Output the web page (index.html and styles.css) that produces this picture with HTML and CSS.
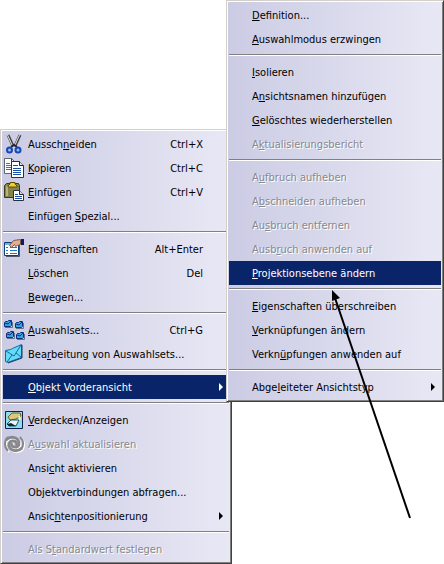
FILE: index.html
```
<!DOCTYPE html>
<html lang="de">
<head>
    <meta charset="UTF-8">
    <title>Objekt Vorderansicht</title>
    <link rel="stylesheet" href="styles.css">
</head>

<body>
<div class="menus">
    <div class="menu main" role="menu">
        <button class="item">
            <svg class="icon" viewBox="0 0 20 20">
                <path d="M4 1l5 11M16 1l-5 11" stroke="#444" stroke-width="3" fill="none"/>
                <path d="M3.5 1l5 11M15.5 1l-5 11" stroke="#e0e0e4" stroke-width="1" fill="none"/>
                <path d="M7 13l3-2 3 2" stroke="#223" stroke-width="2" fill="none"/>
                <circle cx="5.500" cy="16" r="2.500" fill="#9cb8f4" stroke="#1648b4" stroke-width="2"/>
                <circle cx="14" cy="16" r="2.500" fill="#9cb8f4" stroke="#1648b4" stroke-width="2"/>
            </svg>
            <span class="label">Aussch<u>n</u>eiden</span><span class="key">Ctrl+X</span>
        </button>
        <button class="item">
            <svg class="icon" viewBox="0 0 20 20">
                <path d="M.5 .5h7l3 3v12H.5z" fill="#fff" stroke="#5c6872"/>
                <path d="M7.5 .5v3h3" fill="none" stroke="#333"/>
                <path d="M2 5.500h4M2 7.500h5M2 9.500h5M2 11.500h5" stroke="#3c70b8"/>
                <path d="M7.500 3.500h8l4 4v12h-12z" fill="#fff" stroke="#28303c"/>
                <path d="M15.500 3.500v4h4" fill="#d4dce8" stroke="#222"/>
                <path d="M9 7.500h5M9 10.500h8M9 12.500h8M9 14.500h8M9 16.500h8" stroke="#1c50a8"/>
            </svg>
            <span class="label"><u>K</u>opieren</span><span class="key">Ctrl+C</span>
        </button>
        <button class="item">
            <svg class="icon" viewBox="0 0 20 20">
                <path d="M.5 3.500l2-2h12l1 2v12H.5z" fill="#85854a" stroke="#38381c"/>
                <path d="M2 4h2v10H2z" fill="#b4b47c"/>
                <path d="M4 4l2-2V.5h5V2l2 2v1H4z" fill="#f0d030" stroke="#5c4c10"/>
                <path d="M9.500 8.500h6l4 4v6h-10z" fill="#fff" stroke="#28303c"/>
                <path d="M15.500 8.500v4h4" fill="#d4dce8" stroke="#222"/>
                <path d="M11 12.500h3M11 14.500h7M11 16.500h7" stroke="#1c50a8"/>
            </svg>
            <span class="label"><u>E</u>infügen</span><span class="key">Ctrl+V</span>
        </button>
        <button class="item"><span class="icon"></span><span class="label">Einfügen <u>S</u>pezial...</span></button>
        <hr class="line">
        <button class="item">
            <svg class="icon" viewBox="0 0 20 20">
                <path d="M.5 3.500h14v13H.5z" fill="#fff" stroke="#123c74"/>
                <path d="M1 4h7v2H1z" fill="#58c0d8"/>
                <path d="M15.500 5v12.500H2" fill="none" stroke="#50586c"/>
                <path d="M2 8.500h2M2 11.500h2M2 14.500h2M6 8.500h7M6 11.500h7M6 14.500h7" stroke="#1878d0"/>
                <path d="M5.500 6.500l4-5 7-1v5l-3 1-2 1-1-2-3 3z" fill="#e0b090" stroke="#805848"/>
                <path d="M17 0h3v6h-3z" fill="#101868"/>
            </svg>
            <span class="label">E<u>i</u>genschaften</span><span class="key">Alt+Enter</span>
        </button>
        <button class="item"><span class="icon"></span><span class="label"><u>L</u>öschen</span><span class="key">Del</span></button>
        <button class="item"><span class="icon"></span><span class="label"><u>B</u>ewegen...</span></button>
        <hr class="line">
        <button class="item">
            <svg class="icon" viewBox="0 0 20 20">
                <defs>
                    <g id="letter">
                        <path d="M1 7.500h7.500V2" fill="none" stroke="#687088" stroke-width="1"/>
                        <path d="M.5 2.500l1-1h2l1-1h3v5l-1 1h-6z" fill="#38a4e4" stroke="#102c7c"/>
                        <path d="M1 3l3 1 3-3" fill="none" stroke="#102c7c"/>
                    </g>
                </defs>
                <use href="#letter" x="0" y="0"/>
                <use href="#letter" x="11" y="1"/>
                <use href="#letter" x="2" y="11"/>
                <use href="#letter" x="12" y="12"/>
            </svg>
            <span class="label"><u>A</u>uswahlsets...</span><span class="key">Ctrl+G</span>
        </button>
        <button class="item">
            <svg class="icon" viewBox="0 0 20 20">
                <path d="M1.500 6.500l5-1 2-1 9-4v13l-14 5-2-1z" fill="#64dcf4" stroke="#1468a8"/>
                <path d="M2 7l8 5 7-11M3 18l5-7M17 13l-5-4" fill="none" stroke="#1468a8"/>
                <path d="M4 19l14-5V1" fill="none" stroke="#183c68"/>
            </svg>
            <span class="label">Bea<u>r</u>beitung von Auswahlsets...</span>
        </button>
        <hr class="line">
        <button class="item active"><span class="icon"></span><span class="label"><u>O</u>bjekt Vorderansicht</span><span class="more"></span></button>
        <hr class="line">
        <button class="item">
            <svg class="icon" viewBox="0 0 20 20">
                <path d="M1.500 1.500h17v17h-17z" fill="#8cdcec" stroke="#10204c"/>
                <path d="M4 7l4-4h8l1 3-5 3-6 1z" fill="#d8c878" stroke="#6c602c"/>
                <path d="M15 6l1 3-5 4" fill="none" stroke="#f8f0b0" stroke-width="2"/>
                <path d="M3 14l4-4h8l-3 6H5z" fill="#e8f8f8" stroke="#205068"/>
                <path d="M3 14l4-1 5 3H5z" fill="#102838"/>
            </svg>
            <span class="label"><u>V</u>erdecken/Anzeigen</span>
        </button>
        <button class="item" disabled>
            <svg class="icon" viewBox="0 0 20 20">
                <defs>
                    <g id="swirl" fill="none" stroke-width="3">
                        <path d="M12 11c1-2 0-4-3-4-4 0-5 4-3 7 2 3 8 4 12 0"/>
                        <path d="M8 9c-1 2 0 4 3 4 4 0 5-4 3-7-2-3-8-4-12 0"/>
                        <path d="M4 3c-4 4-4 10 0 14M16 3c4 4 4 9 1 12" stroke-width="2"/>
                    </g>
                </defs>
                <use href="#swirl" x="1" y="1" stroke="#fff"/>
                <use href="#swirl" stroke="#88888c"/>
            </svg>
            <span class="label">A<u>u</u>swahl aktualisieren</span>
        </button>
        <button class="item"><span class="icon"></span><span class="label">Ansi<u>c</u>ht aktivieren</span></button>
        <button class="item"><span class="icon"></span><span class="label">Ob<u>j</u>ektverbindungen abfragen...</span></button>
        <button class="item"><span class="icon"></span><span class="label">Ansic<u>h</u>tenpositionierung</span><span class="more"></span></button>
        <hr class="line">
        <button class="item" disabled><span class="icon"></span><span class="label">Als S<u>t</u>andardwert festlegen</span></button>
    </div>

    <div class="menu sub" role="menu">
        <button class="item"><span class="label"><u>D</u>efinition...</span></button>
        <button class="item"><span class="label"><u>A</u>uswahlmodus erzwingen</span></button>
        <hr class="line">
        <button class="item"><span class="label"><u>I</u>solieren</span></button>
        <button class="item"><span class="label">A<u>n</u>sichtsnamen hinzufügen</span></button>
        <button class="item"><span class="label"><u>G</u>elöschtes wiederherstellen</span></button>
        <button class="item" disabled><span class="label">A<u>k</u>tualisierungsbericht</span></button>
        <hr class="line">
        <button class="item" disabled><span class="label">A<u>u</u>fbruch aufheben</span></button>
        <button class="item" disabled><span class="label">A<u>b</u>schneiden aufheben</span></button>
        <button class="item" disabled><span class="label">Au<u>s</u>bruch entfernen</span></button>
        <button class="item" disabled><span class="label">Ausb<u>r</u>uch anwenden auf</span></button>
        <button class="item active"><span class="label"><u>P</u>rojektionsebene ändern</span></button>
        <hr class="line">
        <button class="item"><span class="label"><u>E</u>igenschaften überschreiben</span></button>
        <button class="item"><span class="label"><u>V</u>erknüpfungen ändern</span></button>
        <button class="item"><span class="label">Verkn<u>ü</u>pfungen anwenden auf</span></button>
        <hr class="line">
        <button class="item"><span class="label">Abge<u>l</u>eiteter Ansichtstyp</span><span class="more"></span></button>
    </div>

    <!-- pointer to "Projektionsebene ändern" -->
    <svg class="pointer" viewBox="0 0 80 230">
        <path d="M4 8L79 228" stroke="#000" stroke-width="2"/>
        <path d="M1 0l8 8-8 3z"/>
    </svg>
</div>
</body>
</html>
```
FILE: styles.css
```
body{
    margin: 0;
    background-color: #fff;
    font-family: "DejaVu Sans Condensed", "DejaVu Sans", sans-serif;
    font-size: 11px;
}
.menus{
    position: relative;
    display: flex;
    align-items: flex-start;
}
.menu{
    box-sizing: border-box;
    flex: none;
    padding: 2px;
    background: linear-gradient(to right, #cbcbe4, #e8e8f5);
    border: 1px solid;
    border-color: #d4d0c8 #404040 #404040 #d4d0c8;
    box-shadow: inset 1px 1px #fff, inset -1px -1px #808080;
}
.main{
    min-width: 232px;
    margin-top: 129px;
}
.sub{
    position: relative;
    flex: 1 0 auto;
    margin-left: -6px;
}
.item{
    display: flex;
    align-items: center;
    width: 100%;
    height: 24px;
    padding: 0 6px 0 1px;
    border: 0;
    background: none;
    color: #000;
    font: inherit;
    line-height: 16px;
    text-align: left;
    white-space: nowrap;
}
.sub .item{
    padding-left: 23px;
}
.icon{
    flex: none;
    width: 20px;
    height: 20px;
    margin-right: 4px;
    overflow: visible;
}
.label, .key{
    padding-top: 2px;
}
.label{
    flex: 1;
}
.label u{
    text-underline-offset: 1px;
}
.key{
    padding-right: 20px;
}
.more{
    border: 4px solid transparent;
    border-left-color: currentColor;
    border-right: 0;
}
.active{
    background-color: #0a246a;
    color: #fff;
}
.item:disabled{
    color: #88888c;
    text-shadow: 1px 1px #fff;
}
.line{
    height: 1px;
    margin: 3px 0 4px;
    border: 0;
    border-top: 1px solid #808080;
    background-color: #fff;
}
.pointer{
    position: absolute;
    left: 331px;
    top: 290px;
    width: 80px;
    height: 230px;
    pointer-events: none;
}
```
